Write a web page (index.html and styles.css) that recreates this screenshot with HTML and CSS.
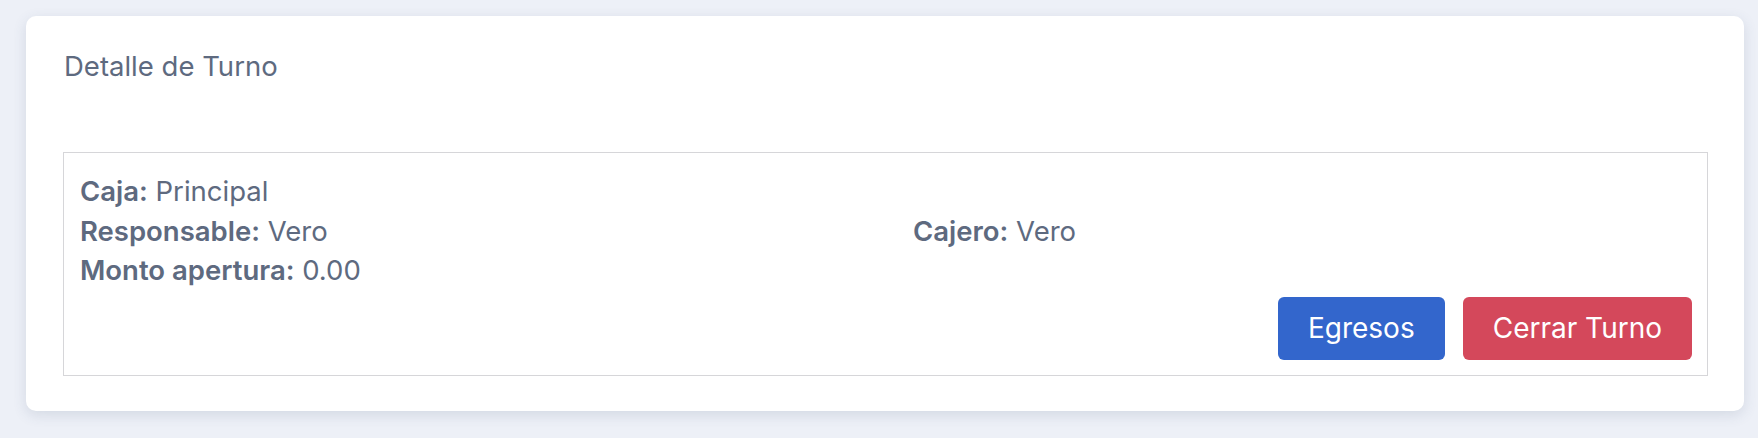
FILE: index.html
```html
<!DOCTYPE html>
<html lang="es">
<head>
    <meta charset="UTF-8">
    <meta name="viewport" content="width=device-width, initial-scale=1.0">
    <title>Detalle de Turno</title>
    <link rel="stylesheet" href="styles.css">
</head>
<body>
    <div class="turno-card">
        <h2 class="turno-header">Detalle de Turno</h2>
        <div class="turno-box">
            <div class="turno-info">
                <p><b>Caja:</b> Principal</p>
                <p></p>
                <p><b>Responsable:</b> Vero</p>
                <p><b>Cajero:</b> Vero</p>
                <p><b>Monto apertura:</b> 0.00</p>
                <p></p>
            </div>
            <div class="turno-actions">
                <button class="turno-button egresos">Egresos</button>
                <button class="turno-button cerrar">Cerrar Turno</button>
            </div>
        </div>
    </div>
</body>
</html>
```

FILE: styles.css
```css
body {
    background-color: #edf0f7;
    margin: 0;
    padding: 16px 14px 27px 26px;
    font-family: Inter, 'Noto Sans', sans-serif;
    color: #5e6a7f;
}
.turno-card {
    background-color: #fff;
    border-radius: 10px;
    padding: 33.5px 36px 35px 37px;
    box-shadow: 0 4px 14px rgba(60, 75, 110, 0.14);
}
.turno-header {
    font-size: 27.5px;
    font-weight: 400;
    line-height: 33px;
    margin: 0 0 69.5px 1px;
}
.turno-box {
    border: 1px solid #d6d6d9;
    padding: 19px 15px 15px 16px;
}
.turno-info {
    display: grid;
    grid-template-columns: 1fr 1fr;
    column-gap: 54px;
}
.turno-info p {
    margin: 0;
    font-size: 27.5px;
    line-height: 39.5px;
}
.turno-info b {
    font-weight: 600;
}
.turno-actions {
    display: flex;
    justify-content: flex-end;
    gap: 18px;
    margin-top: 6px;
}
.turno-button {
    border: none;
    border-radius: 6px;
    color: #fff;
    font-family: Inter, 'Noto Sans', sans-serif;
    font-size: 28px;
    height: 63px;
    padding: 0 30px;
    cursor: pointer;
}
.egresos {
    background-color: #3366cc;
}
.cerrar {
    background-color: #d4485b;
}
```
